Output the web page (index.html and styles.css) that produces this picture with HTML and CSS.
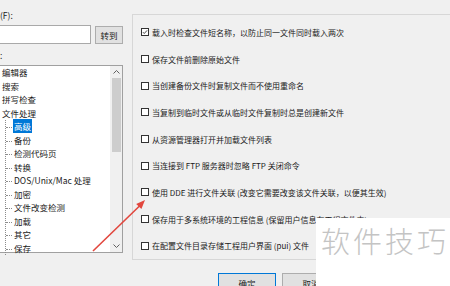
FILE: index.html
```html
<!DOCTYPE html>
<html lang="zh-CN">

<head>
    <meta charset="UTF-8">
    <meta name="viewport" content="width=device-width, initial-scale=1.0">
    <title>文件处理 - 高级</title>
    <link rel="stylesheet" href="styles.css">
</head>

<body>
    <div class="dialog">
        <div class="left">
            <div class="label">(F):</div>
            <div class="find-row">
                <div class="input"></div>
                <button class="btn goto">转到</button>
            </div>
            <div class="label">:</div>
            <div class="listbox">
                <ul class="tree">
                    <li>编辑器</li>
                    <li>搜索</li>
                    <li>拼写检查</li>
                    <li>文件处理
                        <ul class="children">
                            <li><span class="selected">高级</span></li>
                            <li>备份</li>
                            <li>检测代码页</li>
                            <li>转换</li>
                            <li>DOS/Unix/Mac 处理</li>
                            <li>加密</li>
                            <li>文件改变检测</li>
                            <li>加载</li>
                            <li>其它</li>
                            <li>保存</li>
                        </ul>
                    </li>
                </ul>
                <div class="scrollbar">
                    <div class="arrow-btn">
                        <svg width="7" height="4" viewBox="0 0 7 4"><polyline points="0.5,3.5 3.5,0.5 6.5,3.5" fill="none" stroke="#606060" stroke-width="1"/></svg>
                    </div>
                    <div class="thumb"></div>
                    <div class="track"></div>
                    <div class="arrow-btn">
                        <svg width="7" height="4" viewBox="0 0 7 4"><polyline points="0.5,0.5 3.5,3.5 6.5,0.5" fill="none" stroke="#606060" stroke-width="1"/></svg>
                    </div>
                </div>
            </div>
        </div>

        <div class="right">
            <div class="group">
                <label class="row"><span class="check checked"><svg width="8" height="8" viewBox="0 0 8 8"><polyline points="1.2,4.2 3,6 6.8,1.8" fill="none" stroke="#222" stroke-width="1.1"/></svg></span>载入时检查文件短名称，以防止同一文件同时载入两次</label>
                <label class="row"><span class="check"></span>保存文件前删除原始文件</label>
                <label class="row"><span class="check"></span>当创建备份文件时复制文件而不使用重命名</label>
                <label class="row"><span class="check"></span>当复制到临时文件或从临时文件复制时总是创建新文件</label>
                <label class="row"><span class="check"></span>从资源管理器打开并加载文件列表</label>
                <label class="row"><span class="check"></span>当连接到 FTP 服务器时忽略 FTP 关闭命令</label>
                <label class="row"><span class="check"></span>使用 DDE 进行文件关联 (改变它需要改变该文件关联，以便其生效)</label>
                <label class="row"><span class="check"></span>保存用于多系统环境的工程信息 (保留用户信息在工程文件中)</label>
                <label class="row"><span class="check"></span>在配置文件目录存储工程用户界面 (pui) 文件</label>
            </div>
            <div class="buttons">
                <button class="btn default">确定</button>
                <button class="btn">取消</button>
            </div>
        </div>
    </div>

    <svg class="pointer" width="450" height="286" viewBox="0 0 450 286">
        <line x1="93" y1="251" x2="139.5" y2="206" stroke="#e2473e" stroke-width="1.6"/>
        <polygon points="145,200 141.4,209 136.2,204" fill="#e2473e"/>
    </svg>

    <div class="watermark">软件技巧</div>
</body>

</html>
```

FILE: styles.css
```css
*,
*::before,
*::after {
    box-sizing: border-box;
}

body {
    margin: 0;
    width: 450px;
    height: 286px;
    overflow: hidden;
    background: #f0f0f0;
    font-family: "Noto Sans CJK SC", "Noto Sans", sans-serif;
    color: #1a1a1a;
    position: relative;
}

.dialog {
    display: flex;
    align-items: flex-start;
}

.left {
    width: 127px;
    margin-left: -4px;
    flex-shrink: 0;
    font-size: 8.5px;
}

.label {
    height: 12px;
    line-height: 12px;
    padding-left: 4px;
    margin-top: 9px;
}

.label + .listbox {
    margin-top: 4px;
}

.find-row {
    display: flex;
    align-items: center;
    gap: 4px;
    margin-top: 4px;
}

.find-row + .label {
    margin-top: 5px;
}

.input {
    flex: 1;
    height: 19px;
    background: #fff;
    border: 1px solid #a9a9a9;
}

.btn {
    font-family: "Noto Sans CJK SC", sans-serif;
    font-size: 8.5px;
    color: #1a1a1a;
    background: #e1e1e1;
    border: 1px solid #adadad;
    padding: 0;
    cursor: pointer;
}

.goto {
    width: 28px;
    height: 18px;
}

.listbox {
    display: flex;
    height: 188px;
    background: #fff;
    border: 1px solid #a0a0a0;
}

.tree {
    flex: 1;
    list-style: none;
    margin: 0;
    padding: 0 0 0 5px;
    line-height: 13.5px;
    white-space: nowrap;
}

.children {
    list-style: none;
    margin: 0 0 0 3px;
    padding: 0;
    border-left: 1px dotted #8c8c8c;
}

.children li {
    position: relative;
    padding-left: 8px;
}

.children li::before {
    content: "";
    position: absolute;
    left: 0;
    top: 7px;
    width: 6px;
    border-top: 1px dotted #8c8c8c;
}

.selected {
    background: #0078d7;
    color: #fff;
    margin-left: -1px;
    padding: 1px 1px;
}

.scrollbar {
    width: 12px;
    display: flex;
    flex-direction: column;
    background: #f0f0f0;
}

.arrow-btn {
    height: 12px;
    display: flex;
    align-items: center;
    justify-content: center;
}

.thumb {
    height: 74px;
    width: 9px;
    margin-left: 2px;
    background: #cdcdcd;
}

.track {
    flex: 1;
}

.right {
    width: 400px;
    margin-left: 9px;
    flex-shrink: 0;
    font-size: 8px;
}

.group {
    margin-top: 14px;
    border: 1px solid #d7d7d7;
    padding: 4px 0 0 8px;
}

.row {
    display: flex;
    align-items: center;
    gap: 3px;
    height: 26.7px;
    white-space: nowrap;
}

.check {
    width: 8px;
    height: 8px;
    flex-shrink: 0;
    background: #fff;
    border: 1px solid #333;
    display: flex;
    align-items: center;
    justify-content: center;
}

.check svg {
    display: block;
}

.buttons {
    display: flex;
    gap: 6px;
    margin-top: 13px;
    padding-left: 86px;
}

.buttons .btn {
    width: 58px;
    height: 20px;
}

.buttons .default {
    border-color: #0078d7;
}

.pointer {
    position: absolute;
    left: 0;
    top: 0;
    pointer-events: none;
}

.watermark {
    position: absolute;
    left: 316px;
    top: 218px;
    width: 134px;
    height: 68px;
    background: #fff;
    color: #c4c4c4;
    font-size: 29px;
    font-weight: 300;
    letter-spacing: 3px;
    line-height: 30px;
    padding: 7px 0 0 5px;
    white-space: nowrap;
}
```
